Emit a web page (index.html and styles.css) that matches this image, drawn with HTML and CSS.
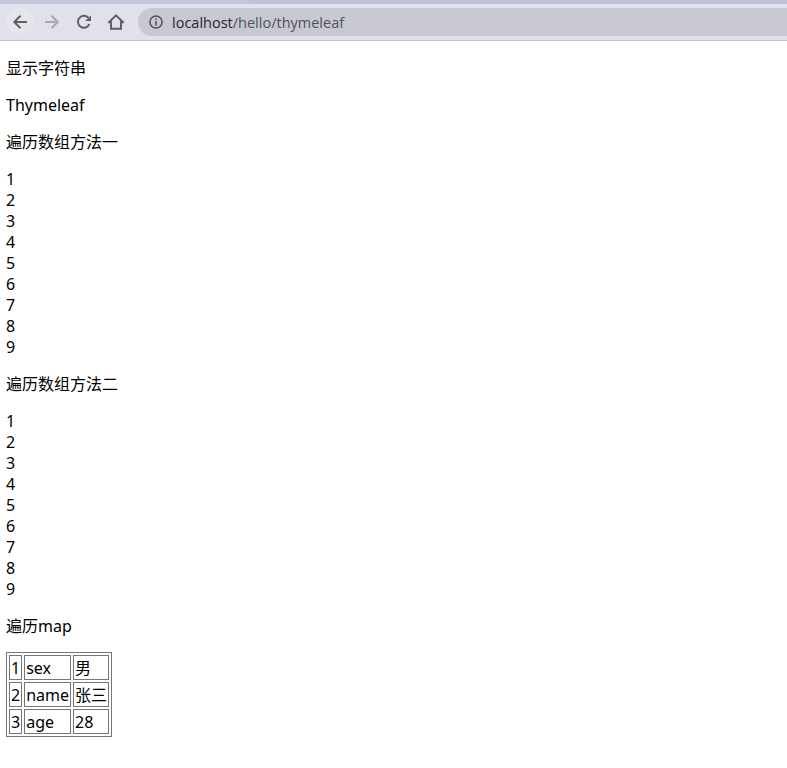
FILE: index.html
```html
<!DOCTYPE html>
<html lang="zh">
<head>
<meta charset="utf-8">
<title>Thymeleaf</title>
<link rel="stylesheet" href="styles.css">
</head>
<body>
<header class="chrome">
  <div class="tabstrip"><div class="tab"></div></div>
  <div class="toolbar">
    <span class="btn btn-back">
      <svg viewBox="0 0 16 16" width="16" height="16"><path d="M15 8H2.5M8.5 1.8L2.3 8l6.2 6.2" fill="none" stroke="#5f6068" stroke-width="2"/></svg>
    </span>
    <span class="btn btn-forward">
      <svg viewBox="0 0 16 16" width="16" height="16"><path d="M1 8h12.5M7.5 1.8L13.7 8l-6.2 6.2" fill="none" stroke="#a9a9b0" stroke-width="2"/></svg>
    </span>
    <span class="btn btn-reload">
      <svg viewBox="0 0 16 16" width="16" height="16"><path d="M13.4 10.2A6 6 0 1 1 12.4 3.7" fill="none" stroke="#5f6068" stroke-width="2"/><path d="M15 1.2V7H9.2z" fill="#5f6068"/></svg>
    </span>
    <span class="btn btn-home">
      <svg viewBox="0 0 16 16" width="16" height="16"><path d="M1 8.2L8 1.4l7 6.8h-2v6.6H3V8.2z" fill="none" stroke="#5f6068" stroke-width="2"/></svg>
    </span>
    <div class="omnibox">
      <svg class="info" viewBox="0 0 14 14" width="14" height="14"><circle cx="7" cy="7" r="6.1" fill="none" stroke="#4f5058" stroke-width="1.5"/><path d="M7 6v4.4M7 3.4v1.5" stroke="#4f5058" stroke-width="1.6"/></svg>
      <span class="url"><span class="host">localhost</span>/hello/thymeleaf</span>
    </div>
  </div>
</header>
<main class="page">
  <p>显示字符串</p>
  <p>Thymeleaf</p>
  <p>遍历数组方法一</p>
  <p>1<br>2<br>3<br>4<br>5<br>6<br>7<br>8<br>9</p>
  <p>遍历数组方法二</p>
  <p>1<br>2<br>3<br>4<br>5<br>6<br>7<br>8<br>9</p>
  <p class="last">遍历map</p>
  <table class="map">
    <tr><td>1</td><td>sex</td><td>男</td></tr>
    <tr><td>2</td><td>name</td><td>张三</td></tr>
    <tr><td>3</td><td>age</td><td>28</td></tr>
  </table>
</main>
</body>
</html>
```
FILE: styles.css
```css
html, body {
  margin: 0;
  padding: 0;
  background: #fff;
}
body {
  font-family: "Noto Sans", "Noto Sans CJK SC", sans-serif;
  font-size: 16px;
  line-height: 21px;
  color: #000;
}
.chrome {
  display: flex;
  flex-direction: column;
  height: 41px;
  box-sizing: border-box;
  border-bottom: 1px solid #c5c5d3;
}
.tabstrip {
  height: 4px;
  background: #bfc0d8;
}
.tab {
  width: 250px;
  height: 4px;
  background: #c6c6da;
  border-top-right-radius: 6px;
}
.toolbar {
  flex: 1;
  display: flex;
  align-items: center;
  background: #e1e1eb;
  padding-left: 6px;
}
.btn {
  width: 28px;
  height: 28px;
  margin-right: 4px;
  display: flex;
  align-items: center;
  justify-content: center;
  border-radius: 50%;
  flex: none;
}
.btn-back { background: #e5e5ec; }
.omnibox {
  flex: 1;
  height: 28px;
  margin-left: 4px;
  display: flex;
  align-items: center;
  background: #c8c8d2;
  border-radius: 14px 0 0 14px;
  padding-left: 11px;
}
.info { flex: none; }
.url {
  margin-left: 9px;
  font-family: "Open Sans", sans-serif;
  font-size: 14.5px;
  color: #50515a;
}
.host { color: #26272c; }
.page {
  margin: 0 6px;
  padding-top: 1px;
}
.page p { margin: 16px 0; }
.page .last { margin-bottom: 15px; }
.map {
  border: 1px solid #767676;
  border-spacing: 2px;
  border-collapse: separate;
}
.map td {
  border: 1px solid #767676;
  padding: 2px 1px 0;
}
```
